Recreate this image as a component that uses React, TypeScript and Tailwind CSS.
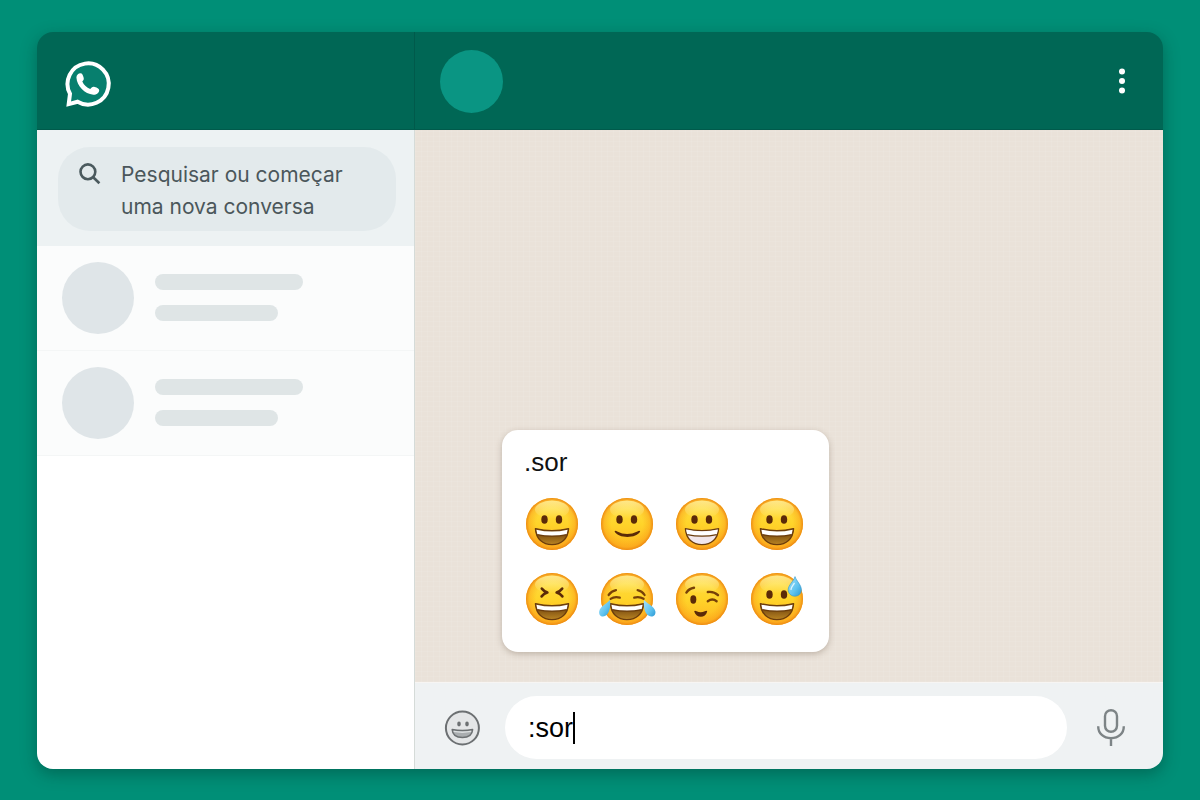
import { useState } from "react";
import type { ReactNode } from "react";

const BROWN = "#5b2a08";

function Face({ children }: { children: ReactNode }) {
  return (
    <svg viewBox="0 0 52 52" className="size-[52px] overflow-visible" aria-hidden="true">
      <circle cx="26" cy="26" r="26" fill="url(#skin)" />
      <circle cx="26" cy="26" r="26" fill="url(#rim)" />
      <ellipse cx="26" cy="11.5" rx="17" ry="9" fill="url(#shine)" />
      {children}
    </svg>
  );
}

function Eyes() {
  return (
    <>
      <ellipse cx="18.5" cy="21.5" rx="3.2" ry="4.3" fill={BROWN} />
      <ellipse cx="33" cy="21.5" rx="3.2" ry="4.3" fill={BROWN} />
    </>
  );
}

function OpenMouth({ teeth = false }: { teeth?: boolean }) {
  return (
    <>
      <path
        d="M9.4 30.6Q26 34.6 42.6 30.6C42 41 35.2 46.6 26 46.6S10 41 9.4 30.6Z"
        fill={teeth ? "#f1e6ea" : "url(#mouth)"}
        stroke="#6b3c0c"
        strokeWidth="1.3"
        strokeLinejoin="round"
      />
      <path d="M10.4 31.7Q26 35.4 41.6 31.7L40.6 36.4Q26 39.4 11.4 36.4Z" fill="#fff" />
      <path d="M11.2 36.6Q26 39.8 40.8 36.6" fill="none" stroke="#6b3c0c" strokeWidth="1.2" />
    </>
  );
}

// gradients shared by all faces
function EmojiDefs() {
  return (
    <svg className="absolute size-0" aria-hidden="true">
      <defs>
        <linearGradient id="skin" x1="0" y1="0" x2="0" y2="1">
          <stop offset="0" stopColor="#ffdf48" />
          <stop offset="0.5" stopColor="#ffd42a" />
          <stop offset="1" stopColor="#feb41f" />
        </linearGradient>
        <radialGradient id="rim">
          <stop offset="0.6" stopColor="#fba81a" stopOpacity="0" />
          <stop offset="0.88" stopColor="#fa9f1a" stopOpacity="0.5" />
          <stop offset="1" stopColor="#ec8712" />
        </radialGradient>
        <linearGradient id="shine" x1="0" y1="0" x2="0" y2="1">
          <stop offset="0" stopColor="#fff3a0" stopOpacity="0.8" />
          <stop offset="1" stopColor="#fff3a0" stopOpacity="0" />
        </linearGradient>
        <linearGradient id="mouth" x1="0" y1="0" x2="0" y2="1">
          <stop offset="0.3" stopColor="#7a4c10" />
          <stop offset="1" stopColor="#b98423" />
        </linearGradient>
        <linearGradient id="tear" x1="0" y1="0" x2="1" y2="1">
          <stop offset="0" stopColor="#a5e2fb" />
          <stop offset="0.6" stopColor="#5fc3ef" />
          <stop offset="1" stopColor="#2c98d4" />
        </linearGradient>
      </defs>
    </svg>
  );
}

const emojis = [
  { name: "sorriso aberto", art: <><Eyes /><OpenMouth /></> },
  {
    name: "sorriso leve",
    art: (
      <>
        <Eyes />
        <path d="M13.6 33.6C13.8 32.5 15 32.6 16.2 33.4Q26 38.6 36.4 33.4C37.8 32.6 39 32.5 39.2 33.6C35.6 40.8 17.2 40.8 13.6 33.6Z" fill={BROWN} />
      </>
    ),
  },
  { name: "sorriso com dentes", art: <><Eyes /><OpenMouth teeth /></> },
  { name: "sorriso grande", art: <><Eyes /><OpenMouth /></> },
  {
    name: "sorriso de olhos fechados",
    art: (
      <>
        <path d="M15.8 15.6Q18 18.4 21.4 19.6Q18 20.4 15.6 23.4M36.2 15.6Q34 18.4 30.6 19.6Q34 20.4 36.4 23.4" fill="none" stroke={BROWN} strokeWidth="2.6" strokeLinecap="round" strokeLinejoin="round" />
        <OpenMouth />
      </>
    ),
  },
  {
    name: "chorando de rir",
    art: (
      <>
        <path d="M7.6 22Q10.5 18 15 17.2M36.6 17.2Q41 18 43.6 22M9.6 25.8Q13.5 23.2 18.8 24.6M33.2 24.6Q38.5 23.2 42.6 25.8" fill="none" stroke="#774008" strokeWidth="2.2" strokeLinecap="round" />
        <OpenMouth />
        <path d="M9 27C9.8 34 8.6 40.4 4.4 42.8C0.8 44.6-2.4 42.4-1.8 38.4C-1 33.6 4.8 31.4 9 27Z" fill="url(#tear)" />
        <path d="M43 27C42.2 34 43.6 40.4 47.8 42.8C51.4 44.6 55 42.4 54.4 38.4C53.6 33.6 47.2 31.4 43 27Z" fill="url(#tear)" />
      </>
    ),
  },
  {
    name: "piscadela",
    art: (
      <>
        <ellipse cx="17.3" cy="26.5" rx="3" ry="4.2" fill={BROWN} />
        <path d="M10.4 19.6Q13 15.6 18 14.8M31.8 19Q38 18.2 42 22.2M31.8 28.2Q36.4 24.8 40.6 28.2" fill="none" stroke="#774008" strokeWidth="2.4" strokeLinecap="round" />
        <path d="M18.2 38.6C18.4 37.4 19.6 37.6 20.6 38.3Q24.6 40.4 28.8 38.3C30 37.6 31 37.4 31.2 38.6C29.6 45.6 20.2 45.6 18.2 38.6Z" fill={BROWN} />
      </>
    ),
  },
  {
    name: "sorriso com gota de suor",
    art: (
      <>
        <Eyes />
        <OpenMouth />
        <path d="M44 3.6C45.4 8 50.4 12 50.4 16.8C50.4 20.6 47.4 23.2 43.8 23.2S37.2 20.4 37.2 16.8C37.2 12 42.6 8.6 44 3.6Z" fill="url(#tear)" stroke="#2f93c8" strokeWidth="0.6" />
        <path d="M40 16.4C40.2 13.8 42 12.4 43.2 10.4" fill="none" stroke="#dcf5fe" strokeWidth="1.4" strokeLinecap="round" />
      </>
    ),
  },
];

function WhatsAppLogo() {
  return (
    <svg viewBox="0 0 46 46" className="size-[46px] overflow-visible" role="img" aria-label="WhatsApp">
      <path d="M5 32.8A20.6 20.6 0 1 1 12.6 40.7L3.7 43.1Z" fill="#077f6e" stroke="#fff" strokeWidth="4" />
      <path
        d="M11.4 16.5C11.4 14 13.4 12.4 15.4 12.3C17.4 12.3 17.8 14 18.6 16.5C19.1 18.5 18.6 19 17.3 20.5C18.8 24 21.8 26.6 25.2 28.1C26.4 26.9 27.2 25.5 29 25.8C31 26.3 34.2 27.4 34.2 29.2C34.2 31.8 31.5 33.8 28.3 33.7C19.6 33 12 25 11.4 16.5Z"
        fill="#fff"
      />
    </svg>
  );
}

function ChatRow() {
  return (
    <li className="flex items-start gap-[21px] border-b border-[#f4f6f6] bg-[#fbfcfc] py-4 pl-[25px]">
      <div className="size-[72px] shrink-0 rounded-full bg-[#dfe5e8]" />
      <div className="flex flex-col gap-[15px] pt-3">
        <div className="h-4 w-[148px] rounded-full bg-[#dfe5e6]" />
        <div className="h-4 w-[123px] rounded-full bg-[#dfe5e6]" />
      </div>
    </li>
  );
}

export default function App() {
  const [search, setSearch] = useState("");
  const [message, setMessage] = useState(":sor");

  return (
    <div className="flex min-h-screen bg-[#008f77] px-[37px] pt-8 pb-[31px] font-['Liberation_Sans',Arial,sans-serif]">
      <EmojiDefs />
      <div className="flex flex-1 overflow-hidden rounded-2xl shadow-[0_5px_16px_rgba(0,50,40,0.4)]">
        <aside className="flex w-[378px] shrink-0 flex-col">
          <header className="flex h-[98px] items-center border-r border-b border-[#005a4b] bg-[#006755] pt-[6px] pl-7">
            <WhatsAppLogo />
          </header>
          <div className="flex flex-1 flex-col border-r border-[#d5dbd8] bg-white">
            <div className="bg-[#edf2f3] pt-[17px] pr-[18px] pb-[15px] pl-[21px]">
              <label className="flex items-start gap-5 rounded-[32px] bg-[#e3eaec] pt-3 pr-4 pb-2 pl-[21px]">
                <svg viewBox="0 0 22 22" className="mt-1 size-[22px] shrink-0" fill="none" stroke="#4b5a5e" strokeWidth="2.6" aria-hidden="true">
                  <circle cx="8.9" cy="8.8" r="7.4" />
                  <path d="M14.2 14.2L20.4 20.2" />
                </svg>
                <textarea
                  rows={2}
                  aria-label="Pesquisar"
                  placeholder={"Pesquisar ou começar\numa nova conversa"}
                  value={search}
                  onChange={(e) => setSearch(e.target.value)}
                  className="block min-w-0 flex-1 resize-none overflow-hidden bg-transparent font-[Inter,sans-serif] text-[21px] leading-8 text-[#4b575b] outline-none placeholder:text-[#4b575b]"
                />
              </label>
            </div>
            <ul>
              <ChatRow />
              <ChatRow />
            </ul>
          </div>
        </aside>

        <section className="flex min-w-0 flex-1 flex-col">
          <header className="flex h-[98px] items-center justify-between border-b border-[#005a4b] bg-[#006755] pt-px pr-[30px] pl-[25px]">
            <div className="size-[63px] rounded-full bg-[#0a9583]" />
            <button type="button" aria-label="Menu">
              <svg viewBox="0 0 22 28" className="h-7 w-[22px]" fill="#fff">
                <circle cx="11" cy="4.5" r="3" />
                <circle cx="11" cy="14" r="3" />
                <circle cx="11" cy="23.5" r="3" />
              </svg>
            </button>
          </header>

          {/* faint woven wallpaper */}
          <main className="flex flex-1 items-end bg-[#eae2d9] bg-[repeating-linear-gradient(0deg,rgba(255,255,255,0.07)_0_1px,transparent_1px_5px),repeating-linear-gradient(90deg,rgba(255,255,255,0.07)_0_1px,transparent_1px_6px)] pb-[30px] pl-[87px]">
            <div className="rounded-2xl bg-white pt-4 pr-[26px] pb-[27px] pl-6 shadow-[0_2px_6px_rgba(90,70,50,0.3)]">
              <p className="-ml-0.5 text-[26px] leading-8 text-[#111]">.sor</p>
              <div className="mt-5 grid grid-cols-4 gap-[23px]">
                {emojis.map((emoji) => (
                  <button key={emoji.name} type="button" aria-label={emoji.name} className="block">
                    <Face>{emoji.art}</Face>
                  </button>
                ))}
              </div>
            </div>
          </main>

          <footer className="flex items-center gap-[25px] border-t border-[#f7f5f3] bg-[#eff2f3] pt-[13px] pr-[33px] pb-[10px] pl-[29px]">
            <button type="button" aria-label="Emojis">
              <svg viewBox="0 0 36 36" className="size-9">
                <circle cx="18.4" cy="18" r="16.5" fill="#e4e6e7" stroke="#6c7072" strokeWidth="2" />
                <ellipse cx="15" cy="14" rx="1.8" ry="2.4" fill="#6c7072" />
                <ellipse cx="23" cy="14" rx="1.8" ry="2.4" fill="#6c7072" />
                <path d="M8.2 19.6Q18.4 21.4 28.6 19.6C28.2 25.2 24.4 27.4 18.4 27.4S8.6 25.2 8.2 19.6Z" fill="#a9adaf" stroke="#6c7072" strokeWidth="1.5" strokeLinejoin="round" />
                <path d="M9.6 21.4Q18.4 23 27.2 21.4" fill="none" stroke="#dcdfe0" strokeWidth="1.4" />
              </svg>
            </button>
            <label className="flex h-[63px] min-w-0 flex-1 items-center rounded-full bg-white pl-[23px]">
              <input
                type="text"
                aria-label="Mensagem"
                value={message}
                onChange={(e) => setMessage(e.target.value)}
                className="field-sizing-content max-w-full bg-transparent text-[27px] leading-8 text-black caret-transparent outline-none"
              />
              <span className="h-8 w-0.5 bg-black" />
            </label>
            <button type="button" aria-label="Gravar áudio">
              <svg viewBox="0 0 38 38" className="size-[38px]" fill="none" stroke="#7d8486" strokeWidth="2.4">
                <rect x="13" y="1.2" width="12" height="21.6" rx="6" />
                <path d="M6.2 17.2C6.2 24.6 11.6 29.2 19 29.2S31.8 24.6 31.8 17.2M19 29.2V37" />
              </svg>
            </button>
          </footer>
        </section>
      </div>
    </div>
  );
}
